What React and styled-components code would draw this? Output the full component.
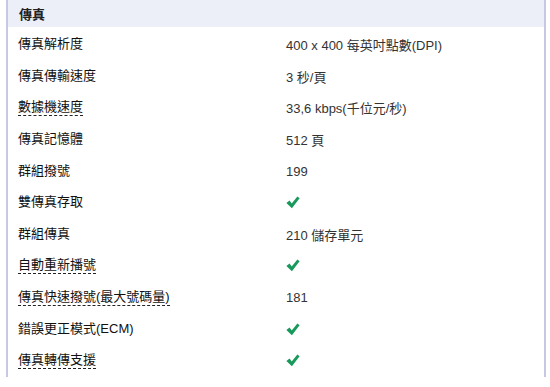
import React from "react";
import styled, { createGlobalStyle } from "styled-components";

const GlobalStyle = createGlobalStyle`
  body {
    margin: 0;
    background: #fff;
    font-family: "Liberation Sans", Arial, "Noto Sans CJK TC", sans-serif;
  }
`;

const specs = [
  { label: "傳真解析度", value: "400 x 400 每英吋點數(DPI)" },
  { label: "傳真傳輸速度", value: "3 秒/頁" },
  { label: "數據機速度", value: "33,6 kbps(千位元/秒)", hint: true },
  { label: "傳真記憶體", value: "512 頁" },
  { label: "群組撥號", value: "199" },
  { label: "雙傳真存取", check: true },
  { label: "群組傳真", value: "210 儲存單元" },
  { label: "自動重新播號", check: true, hint: true },
  { label: "傳真快速撥號(最大號碼量)", value: "181", hint: true },
  { label: "錯誤更正模式(ECM)", check: true },
  { label: "傳真轉傳支援", check: true, hint: true },
];

const Check = () => (
  <svg width="14" height="13" viewBox="0 0 14 13">
    <path
      d="M0.4 7 L3.6 4.6 L5.7 7.4 L11.4 0.6 L13.6 2.3 L5.9 12.2 Z"
      fill="#17995a"
    />
  </svg>
);

const App = () => {
  return (
    <>
      <GlobalStyle />
      <Panel>
        <Header>傳真</Header>
        <List>
          {specs.map((s) => (
            <Row key={s.label}>
              <Label $hint={s.hint}>{s.label}</Label>
              <Value>{s.check ? <Check /> : s.value}</Value>
            </Row>
          ))}
        </List>
      </Panel>
    </>
  );
};

export default App;

const Panel = styled.div`
  margin-left: 6px;
  width: 536px;
  border-left: 2px solid #c6c8e4;
  border-right: 2px solid #c6c8e4;
`;

const Header = styled.div`
  height: 27px;
  background: #eceef8;
  display: flex;
  align-items: center;
  padding-left: 11px;
  font-family: "Noto Sans CJK TC", sans-serif;
  font-weight: bold;
  font-size: 13px;
  color: #222;
`;

const List = styled.div`
  padding-top: 2px;
`;

const Row = styled.div`
  height: 31.6px;
  display: grid;
  grid-template-columns: 268px 1fr;
  align-items: center;
  padding-left: 10px;
  font-size: 13px;
`;

const Label = styled.span`
  justify-self: start;
  color: #111;
  line-height: 16px;
  border-bottom: ${(p) => (p.$hint ? "1px dashed #222" : "1px solid transparent")};
`;

const Value = styled.span`
  color: #333;
  display: flex;
  align-items: center;
`;
